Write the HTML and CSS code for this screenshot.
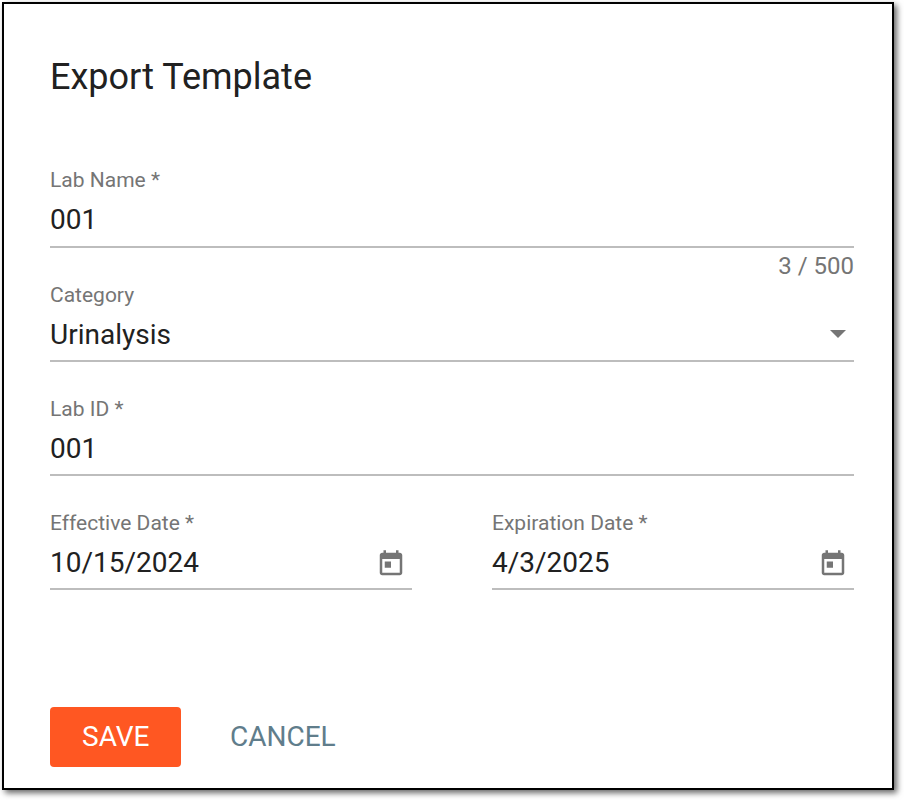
FILE: index.html
```html
<!DOCTYPE html>
<html lang="en">
<head>
    <meta charset="utf-8">
    <meta name="viewport" content="width=device-width, initial-scale=1">
    <title>Export Template</title>
    <link rel="stylesheet" href="styles.css">
</head>
<body>
    <div class="dialog">
        <h1 class="title">Export Template</h1>
        <div class="form">
            <div class="field field-name">
                <label class="label">Lab Name *</label>
                <div class="control"><span class="value">001</span></div>
                <div class="counter">3 / 500</div>
            </div>
            <div class="field field-category">
                <label class="label">Category</label>
                <div class="control">
                    <span class="value">Urinalysis</span>
                    <span class="arrow"></span>
                </div>
            </div>
            <div class="field field-id">
                <label class="label">Lab ID *</label>
                <div class="control"><span class="value">001</span></div>
            </div>
            <div class="dates">
                <div class="field">
                    <label class="label">Effective Date *</label>
                    <div class="control">
                        <span class="value">10/15/2024</span>
                        <svg class="calendar" viewBox="0 0 24 24"><path d="M19 3h-1V1h-2v2H8V1H6v2H5c-1.110 0-1.990.9-1.990 2L3 19c0 1.100.890 2 2 2h14c1.100 0 2-.9 2-2V5c0-1.100-.9-2-2-2zm0 16H5V8h14v11zM7 10h5v5H7z"/></svg>
                    </div>
                </div>
                <div class="field">
                    <label class="label">Expiration Date *</label>
                    <div class="control">
                        <span class="value">4/3/2025</span>
                        <svg class="calendar" viewBox="0 0 24 24"><path d="M19 3h-1V1h-2v2H8V1H6v2H5c-1.110 0-1.990.9-1.990 2L3 19c0 1.100.890 2 2 2h14c1.100 0 2-.9 2-2V5c0-1.100-.9-2-2-2zm0 16H5V8h14v11zM7 10h5v5H7z"/></svg>
                    </div>
                </div>
            </div>
        </div>
        <div class="actions">
            <button class="btn btn-save">SAVE</button>
            <button class="btn btn-cancel">CANCEL</button>
        </div>
    </div>
</body>
</html>
```

FILE: styles.css
```css
html, body {
    margin: 0;
    padding: 0;
    background: #fff;
}

body {
    font-family: 'Roboto', sans-serif;
    height: 800px;
    overflow: hidden;
}

.dialog {
    box-sizing: border-box;
    width: 892px;
    height: 788px;
    margin: 2px 0 0 2px;
    padding: 0 38px 0 46px;
    border: 2px solid #000;
    background: #fff;
    box-shadow: 3px 3px 6px rgba(0, 0, 0, 0.6);
    display: flex;
    flex-direction: column;
}

.title {
    margin: 52px 0 0;
    font-size: 36px;
    line-height: 42px;
    font-weight: 400;
    color: #212121;
}

.form {
    margin-top: 70px;
    display: flex;
    flex-direction: column;
}

.field {
    flex: 1;
}

.field-category {
    margin-top: 2px;
}

.field-id {
    margin-top: 35px;
}

.dates {
    display: flex;
    gap: 80px;
    margin-top: 35px;
}

.label {
    display: block;
    font-size: 21px;
    line-height: 24px;
    color: #757575;
}

.control {
    display: flex;
    align-items: center;
    justify-content: space-between;
    height: 55px;
    padding-top: 1px;
    box-sizing: border-box;
    border-bottom: 2px solid #bdbdbd;
}

.field-name .control {
    height: 56px;
    padding-top: 0;
}

.value {
    font-size: 28px;
    color: #212121;
}

.counter {
    margin-top: 3px;
    text-align: right;
    font-size: 24px;
    line-height: 30px;
    color: #757575;
}

.arrow {
    width: 0;
    height: 0;
    margin-right: 8px;
    border-left: 8px solid transparent;
    border-right: 8px solid transparent;
    border-top: 8px solid #757575;
}

.calendar {
    width: 30px;
    height: 30px;
    margin-top: 3px;
    margin-right: 6px;
    fill: #757575;
}

.actions {
    margin-top: auto;
    margin-bottom: 21px;
    display: flex;
    gap: 17px;
}

.btn {
    height: 60px;
    padding: 0 32px 2px;
    border: 0;
    border-radius: 4px;
    font-family: inherit;
    font-size: 28px;
    font-weight: 400;
    background: transparent;
}

.btn-save {
    width: 131px;
    background: #ff5722;
    color: #fff;
}

.btn-cancel {
    color: #607d8b;
}
```
